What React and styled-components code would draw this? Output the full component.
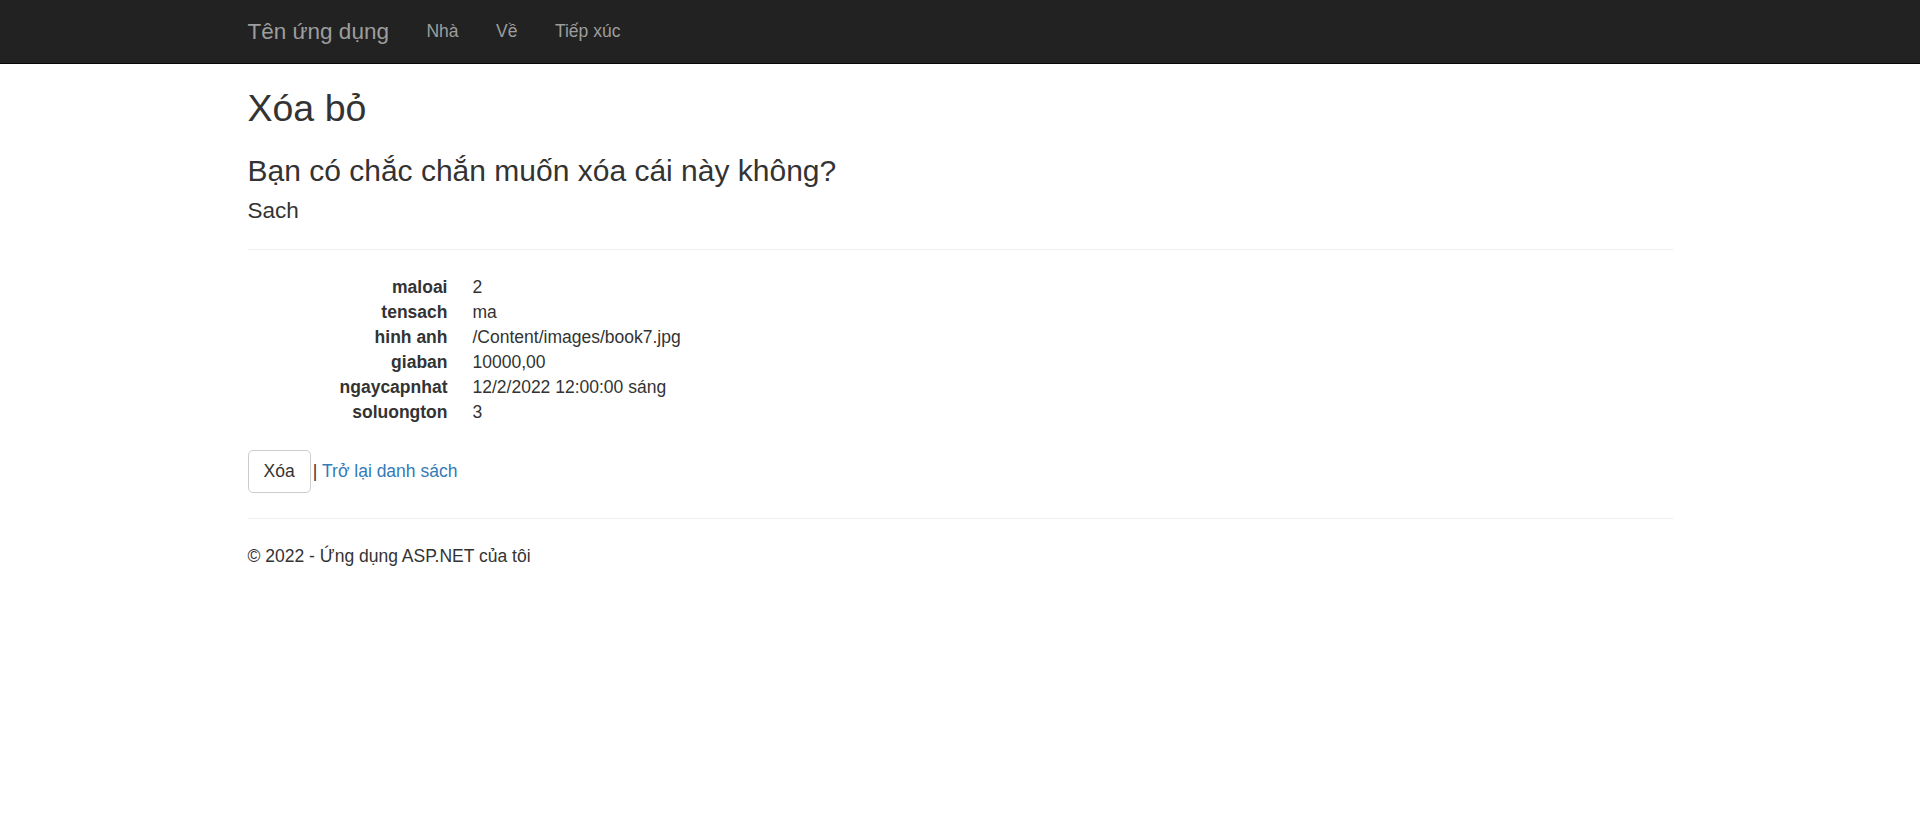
import React from 'react';
import styled, {createGlobalStyle} from "styled-components";

const GlobalStyle = createGlobalStyle`
  * { box-sizing: border-box; }
  body {
    margin: 0;
    padding-top: 62.5px;
    padding-bottom: 25px;
    font-family: "Liberation Sans", Arial, Helvetica, sans-serif;
    font-size: 17.5px;
    line-height: 1.42857;
    color: #333;
    background: #fff;
  }
`

const details = [
    {label: 'maloai', value: '2'},
    {label: 'tensach', value: 'ma'},
    {label: 'hinh anh', value: '/Content/images/book7.jpg'},
    {label: 'giaban', value: '10000,00'},
    {label: 'ngaycapnhat', value: '12/2/2022 12:00:00 sáng'},
    {label: 'soluongton', value: '3'},
]

const App = () => {
    return (
        <>
            <GlobalStyle/>
            <NavBar>
                <NavContainer>
                    <Brand href="#">Tên ứng dụng</Brand>
                    <NavList>
                        <li><NavLink href="#">Nhà</NavLink></li>
                        <li><NavLink href="#">Về</NavLink></li>
                        <li><NavLink href="#">Tiếp xúc</NavLink></li>
                    </NavList>
                </NavContainer>
            </NavBar>
            <Content>
                <Title>Xóa bỏ</Title>
                <Question>Bạn có chắc chắn muốn xóa cái này không?</Question>
                <div>
                    <EntityName>Sach</EntityName>
                    <Rule/>
                    <DetailList>
                        {details.map((d) => (
                            <React.Fragment key={d.label}>
                                <dt>{d.label}</dt>
                                <dd>{d.value}</dd>
                            </React.Fragment>
                        ))}
                    </DetailList>
                    <Actions>
                        <Button type="button">Xóa</Button>| <TextLink href="#">Trở lại danh sách</TextLink>
                    </Actions>
                </div>
                <Rule/>
                <Footer>
                    <p>© 2022 - Ứng dụng ASP.NET của tôi</p>
                </Footer>
            </Content>
        </>
    );
};

const NavBar = styled.nav`
  position: fixed;
  top: 0;
  left: 0;
  right: 0;
  z-index: 1030;
  min-height: 62.5px;
  background: #222;
  border-bottom: 1.25px solid #080808;
`
const Container = styled.div`
  width: 1462.5px;
  margin: 0 auto;
  padding: 0 18.75px;
`
const NavContainer = styled(Container)`
  display: flex;
  align-items: center;
`
const Brand = styled.a`
  display: block;
  height: 62.5px;
  padding: 18.75px;
  margin-left: -18.75px;
  font-size: 22.5px;
  line-height: 25px;
  color: #9d9d9d;
  text-decoration: none;
`
const NavList = styled.ul`
  display: flex;
  margin: 0;
  padding: 0;
  list-style: none;
`
const NavLink = styled.a`
  display: block;
  padding: 18.75px;
  line-height: 25px;
  color: #9d9d9d;
  text-decoration: none;
`
const Content = styled(Container)`
  padding-left: 18.75px;
  padding-right: 18.75px;
`
const Title = styled.h2`
  margin: 25px 0 12.5px;
  font-size: 37.5px;
  font-weight: 500;
  line-height: 1.1;
`
const Question = styled.h3`
  margin: 25px 0 12.5px;
  font-size: 30px;
  font-weight: 500;
  line-height: 1.1;
`
const EntityName = styled.h4`
  margin: 12.5px 0;
  font-size: 22.5px;
  font-weight: 500;
  line-height: 1.1;
`
const Rule = styled.hr`
  margin: 25px 0;
  border: 0;
  border-top: 1.25px solid #eee;
`
const DetailList = styled.dl`
  display: grid;
  grid-template-columns: 200px 1fr;
  column-gap: 25px;
  margin: 0 0 25px;
  dt {
    font-weight: 700;
    text-align: right;
    white-space: nowrap;
  }
  dd {
    margin: 0;
  }
`
const Actions = styled.div`
  display: flex;
  align-items: center;
  white-space: pre;
`
const Button = styled.button`
  display: inline-block;
  margin-right: 2px;
  padding: 8.25px 15px;
  font-family: inherit;
  font-size: 17.5px;
  line-height: 25px;
  color: #333;
  background: #fff;
  border: 1.25px solid #ccc;
  border-radius: 5px;
`
const TextLink = styled.a`
  color: #337ab7;
  text-decoration: none;
`
const Footer = styled.footer`
  p {
    margin: 0 0 12.5px;
  }
`

export default App;
